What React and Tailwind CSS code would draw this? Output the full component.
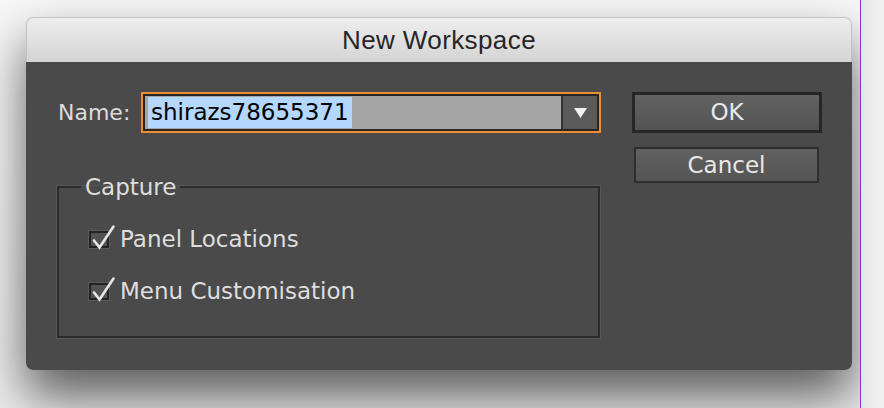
import React from 'react';

const font = { fontFamily: '"DejaVu Sans", "Open Sans", sans-serif' };

const Check = ({ label }) => (
  <div className="flex items-center h-[28px]">
    <div className="relative w-[20px] h-[17px] mr-[11px] border-2 border-[#232323] bg-[#525252] shadow-[0_0_0_1px_#5a5a5a]">
      <svg className="absolute left-[-1px] top-[-11px]" width="28" height="30" viewBox="0 0 28 30">
        <path d="M4 18.5 L9.5 25.5 L23.5 4.5" fill="none" stroke="#e6e6e6" strokeWidth="2.6" strokeLinecap="round" strokeLinejoin="miter" />
      </svg>
    </div>
    <span className="text-[23px] leading-[28px] text-[#dedede]">{label}</span>
  </div>
);

export default function App() {
  return (
    <div
      className="w-[884px] h-[408px] flex items-stretch overflow-hidden bg-gradient-to-b from-[#f7f7f7] to-[#ececec]"
      style={font}
    >
      <div className="pl-[26px] pt-[17px]">
        {/* dialog */}
        <div className="w-[826px] h-[353px] flex flex-col rounded-[7px] shadow-[0_26px_50px_rgba(0,0,0,0.62)]">
          <div className="h-[45px] shrink-0 flex items-center justify-center rounded-t-[7px] border border-b-0 border-[#c2c2c2] bg-gradient-to-b from-[#eeeeee] to-[#d4d4d4]">
            <span
              className="text-[26px] text-[#262626] tracking-[0.4px]"
              style={{ fontFamily: '"Liberation Sans", Arial, sans-serif' }}
            >
              New Workspace
            </span>
          </div>
          <div className="flex-1 flex bg-[#4a4a4a] rounded-b-[7px] pl-[31px] pt-[30px] pr-[30px]">
            {/* left column */}
            <div className="w-[545px] flex flex-col">
              <div className="flex items-center h-[41px]">
                <span className="w-[84px] pl-[1px] text-[22px] text-[#dcdcdc]">Name:</span>
                <div className="w-[460px] h-[41px] border-2 border-[#e88f34] flex">
                  <div className="flex-1 flex border-2 border-[#262626]">
                    <div className="flex-1 flex items-center bg-[#a6a6a6] pl-[3px]">
                      <span className="bg-[#b3d7ff] text-black text-[23px] leading-[31px] pl-[3px] pr-[3px]">
                        shirazs78655371
                      </span>
                    </div>
                    <div className="w-[36px] flex items-center justify-center border-l-2 border-[#333333] bg-[#5b5b5b]">
                      <svg width="13" height="10" viewBox="0 0 13 10">
                        <path d="M0 0 H13 L6.5 10 Z" fill="#f2f2f2" />
                      </svg>
                    </div>
                  </div>
                </div>
              </div>
              <fieldset className="mt-[40px] w-[543px] h-[165px] border-2 border-[#2b2b2b] shadow-[0_0_0_1px_#575757]">
                <legend className="ml-[22px] px-[4px] text-[23px] leading-[28px] text-[#dedede]">Capture</legend>
                <div className="flex flex-col gap-[24px] mt-[24px] pl-[30px]">
                  <Check label="Panel Locations" />
                  <Check label="Menu Customisation" />
                </div>
              </fieldset>
            </div>
            {/* right column */}
            <div className="ml-[30px] flex flex-col items-start">
              <button className="w-[190px] h-[41px] border-[3px] border-[#262626] bg-gradient-to-b from-[#626262] to-[#535353] text-[23px] text-[#e8e8e8] leading-none">
                OK
              </button>
              <button className="ml-[2px] mt-[14px] w-[185px] h-[36px] border-2 border-[#2e2e2e] bg-gradient-to-b from-[#616161] to-[#545454] text-[23px] text-[#e8e8e8] leading-none">
                Cancel
              </button>
            </div>
          </div>
        </div>
      </div>
      <div className="ml-[8px] w-[1px] bg-[#9a32c8]" />
      <div className="flex-1 bg-gradient-to-r from-[#e6e6e6] to-[#f2f2f2]" />
    </div>
  );
}
